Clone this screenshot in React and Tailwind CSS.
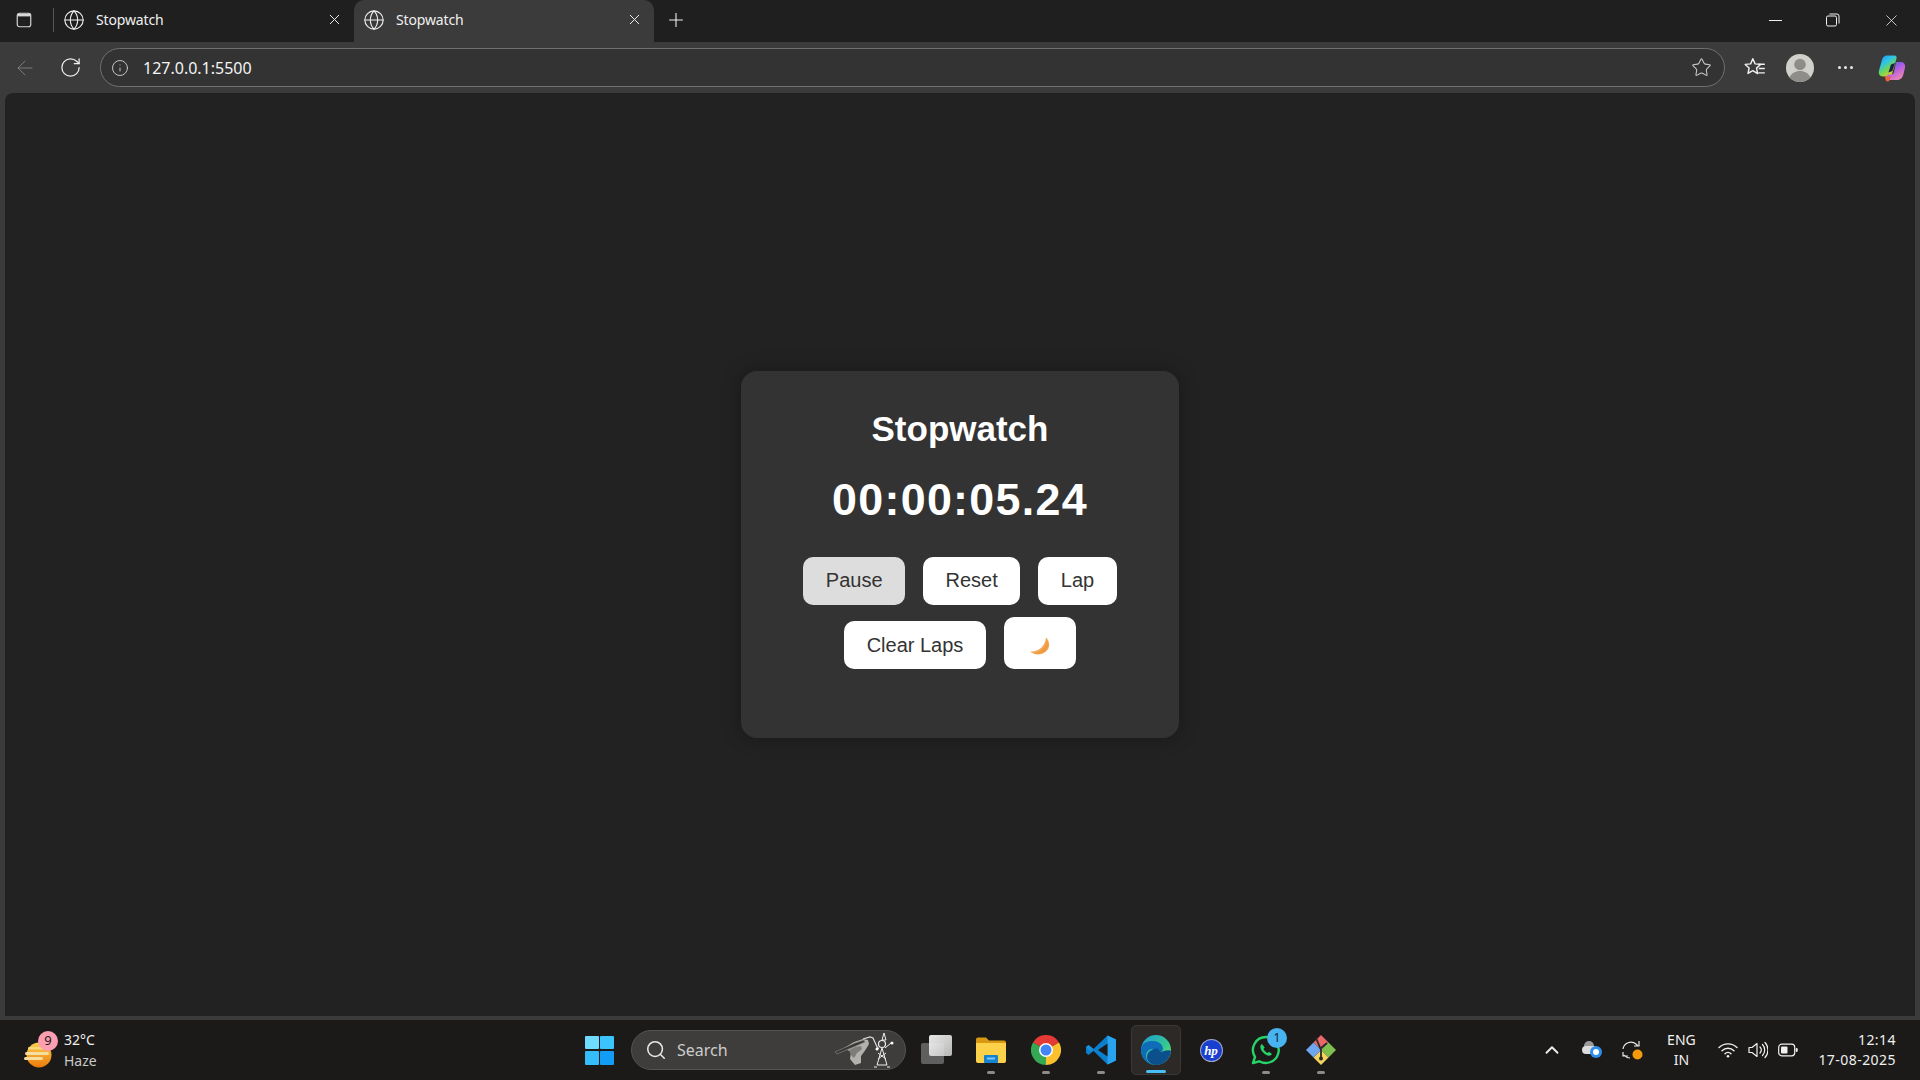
import React from 'react';
import { ArrowLeft, ChevronUp, Globe, Info, Plus, RotateCw, Search, Star, X } from 'lucide-react';

const uiFont = { fontFamily: '"Noto Sans", sans-serif' };

function SidebarIcon() {
    return (
        <svg width="20" height="20" viewBox="0 0 20 20" fill="none">
            <rect x="2.5" y="2.5" width="15" height="15" rx="2.5" stroke="#d8d8d8" strokeWidth="1.3" />
            <path d="M3 3h14v3H3z" fill="#d8d8d8" />
        </svg>
    );
}

function Tab({ active }) {
    return (
        <div className={`flex h-[42px] w-[300px] items-center pr-[11px] pb-[3px] pl-[9px] ${active ? 'rounded-t-[10px] bg-[#3b3b3b]' : ''}`}>
            <Globe size={22} strokeWidth={1.2} color="#f0f0f0" />
            <span className="ml-[11px] flex-1 text-[14px] tracking-[-0.15px] text-[#f0f0f0]">Stopwatch</span>
            <X size={17} strokeWidth={1.4} color="#eeeeee" />
        </div>
    );
}

function RestoreIcon() {
    return (
        <svg width="14" height="14" viewBox="0 0 14 14" fill="none" stroke="#f0f0f0" strokeWidth="1">
            <rect x="0.5" y="3" width="10" height="10" rx="1.5" />
            <path d="M3.5 1h7.5a2 2 0 0 1 2 2v7.5" />
        </svg>
    );
}

function FavoritesIcon() {
    return (
        <svg width="24" height="24" viewBox="0 0 22 22" fill="none" stroke="#f0f0f0" strokeWidth="1.3" strokeLinejoin="round">
            <path d="M9 2.500l2.100 4.700 5 .5-3.700 3.400 1 5-4.400-2.600L4.600 16l1-5L2 7.700l5-.5z" />
            <path d="M14 7.500h6M14.500 11.500h5.500M14 15.500h6" />
        </svg>
    );
}

function ProfileIcon() {
    return (
        <svg width="28" height="28" viewBox="0 0 28 28">
            <circle cx="14" cy="14" r="14" fill="#d2d0cb" />
            <circle cx="14" cy="10.500" r="5.800" fill="#8f8d89" />
            <path d="M3.500 23.500c1.800-4.200 5.800-6.500 10.500-6.500s8.700 2.300 10.500 6.500A14 14 0 0 1 14 28a14 14 0 0 1-10.500-4.500z" fill="#8f8d89" />
        </svg>
    );
}

function CopilotLogo() {
    return (
        <svg width="28" height="28" viewBox="0 0 28 28">
            <defs>
                <linearGradient id="copA" x1="0.1" y1="0" x2="0.7" y2="1">
                    <stop offset="0" stopColor="#1d9bf0" />
                    <stop offset="0.35" stopColor="#2fc4e8" />
                    <stop offset="0.65" stopColor="#6fd84f" />
                    <stop offset="1" stopColor="#f7c82d" />
                </linearGradient>
                <linearGradient id="copB" x1="0.2" y1="0" x2="0.8" y2="1">
                    <stop offset="0" stopColor="#4f5de8" />
                    <stop offset="0.45" stopColor="#b560e0" />
                    <stop offset="1" stopColor="#f58bb0" />
                </linearGradient>
            </defs>
            <path d="M9 1.500h7.500c1.800 0 2.500 1.500 2 3L14 20c-.6 1.600-1.800 2.500-3.500 2.500H5c-3.500 0-4.800-3-4-6l3-10.500C4.800 3 6.500 1.500 9 1.500z" fill="url(#copA)" />
            <path d="M18 8h5c3 0 4.600 2.500 4 5.500l-1.500 6.500c-.9 3.800-3 6-6.500 6h-8c-1.800 0-2.800-1.300-2.200-3l1-2.500h3c1.500 0 2.700-.8 3.200-2.300z" fill="url(#copB)" />
            <path d="M7 22.500h6l-1.500 3.800c-.3.800-1 1.200-2 1.200-1.500 0-2.200-2-2.500-5z" fill="#f0603a" />
            <path d="M13 10.500l4-1.500-2.600 8-4 1.500z" fill="#1c2340" />
        </svg>
    );
}

function MoonIcon() {
    return (
        <svg width="20" height="18" viewBox="0 0 20 18">
            <path d="M16 0.500C20 4 20.500 11 16 14.500 11.500 18.500 4.500 18.500 0 14.500 8 15.500 15 9.500 16 0.500z" fill="#f5a95a" />
            <path d="M17 3c2 4 1.500 8.500-1.500 11-3.500 3-8 3.300-11.500 2 6-.5 12-5.500 13-13z" fill="#ee9a40" />
        </svg>
    );
}

function StopButton({ label, pressed, lift = true }) {
    return (
        <button className={`h-[48px] rounded-[10px] px-[22.5px] text-[20px] text-[#333333] ${lift ? 'pb-[3px]' : ''} ${pressed ? 'bg-[#dddddd]' : 'bg-white'}`}>
            {label}
        </button>
    );
}

function StopwatchCard() {
    return (
        <div
            className="flex h-[367px] w-[438px] flex-col items-center rounded-[16px] bg-[#333333] pt-[28px] shadow-[0_0_20px_rgba(0,0,0,0.3)]"
            style={{ fontFamily: '"Liberation Sans", sans-serif' }}
        >
            <h1 className="h-[60px] text-[35px] leading-[60px] font-bold text-white">Stopwatch</h1>
            <div className="mt-[14px] text-[44.8px] leading-[52px] font-bold tracking-[1.3px] text-white">00:00:05.24</div>
            <div className="mt-[32px] flex gap-[18px]">
                <StopButton label="Pause" pressed />
                <StopButton label="Reset" />
                <StopButton label="Lap" />
            </div>
            <div className="mt-[12px] flex items-end gap-[18px]">
                <StopButton label="Clear Laps" lift={false} />
                <button className="flex h-[52px] w-[72px] items-center justify-center rounded-[10px] bg-white pt-[5px] pl-[1px]">
                    <MoonIcon />
                </button>
            </div>
        </div>
    );
}

function WeatherIcon() {
    return (
        <div className="relative h-[42px] w-[44px]">
            <svg width="30" height="28" viewBox="0 0 30 28" className="absolute top-[12px] left-0">
                <defs>
                    <linearGradient id="sun" x1="0" y1="0" x2="0" y2="1">
                        <stop offset="0" stopColor="#fbcf4b" />
                        <stop offset="1" stopColor="#ee7a0c" />
                    </linearGradient>
                </defs>
                <circle cx="15" cy="14" r="12.500" fill="url(#sun)" />
                <rect x="1" y="11" width="24" height="3" rx="1.500" fill="#f6dda0" />
                <rect x="0" y="16" width="19" height="3" rx="1.500" fill="#f6dda0" />
                <rect x="4" y="6" width="22" height="2.500" rx="1.250" fill="#f8d977" />
            </svg>
            <span className="absolute top-[2px] left-[14px] flex h-[20px] w-[20px] items-center justify-center rounded-full bg-[#fd9fb0] text-[13px] text-[#1a1a1a]">9</span>
        </div>
    );
}

function WindowsLogo() {
    const tiles = ['bg-[#6fdcff]', 'bg-[#3cc4ff]', 'bg-[#35bdfb]', 'bg-[#129cf5]'];
    return (
        <div className="grid h-[29px] w-[29px] grid-cols-2 gap-[1.5px]">
            {tiles.map((t) => (
                <div key={t} className={`rounded-[1px] ${t}`} />
            ))}
        </div>
    );
}

function Doodle() {
    return (
        <svg width="60" height="38" viewBox="0 0 60 38" fill="none">
            <path d="M9 17l10-6 9-3 5 1 1 4-3 5-2 3-3 4 0 7-6 2-5-6 1-7z" fill="#b3b1ae" />
            <path d="M14 19l6-3 6-1 1 3-5 4-3 5-3-3z" fill="#7f7d7b" />
            <path d="M0 21l20-9 9-3 1 2-9 4-19 8z" fill="#3a3836" stroke="#8d8b88" strokeWidth="0.600" />
            <path d="M28 8l7-2 3 1 5 11" stroke="#dddddd" strokeWidth="1.200" />
            <circle cx="47" cy="13" r="3.500" stroke="#eeeeee" strokeWidth="1.200" />
            <path d="M47 9l2-7 2 7z" stroke="#eeeeee" />
            <path d="M47 17l-5 17M47 17l5 17M42 34h10M42 36h-3M52 36h3M43 22l8 6M51 22l-8 6M50 17l6-5M44 17l-3 1" stroke="#eeeeee" strokeWidth="1" />
            <circle cx="42" cy="18" r="1.500" fill="#ffffff" />
            <circle cx="57" cy="12" r="1.500" fill="#ffffff" />
        </svg>
    );
}

function TaskView() {
    return (
        <div className="relative h-[30px] w-[31px]">
            <div className="absolute top-[8px] left-0 h-[21px] w-[23px] rounded-[2px] bg-[#5f5f5f]" />
            <div className="absolute top-0 left-[8px] h-[21px] w-[23px] rounded-[2px] bg-gradient-to-br from-[#ffffff] to-[#c9c9c9] opacity-90" />
        </div>
    );
}

function FolderIcon() {
    return (
        <svg width="30" height="26" viewBox="0 0 30 26">
            <path d="M0 2.500A2 2 0 0 1 2 .5h8l3 3h15a2 2 0 0 1 2 2V8H0z" fill="#d99a12" />
            <path d="M0 6h30v18a2 2 0 0 1-2 2H2a2 2 0 0 1-2-2z" fill="#fdd14a" />
            <rect x="8" y="18" width="14" height="8" rx="1" fill="#1583cf" />
            <rect x="11" y="20.500" width="8" height="2" fill="#7cc7f5" />
        </svg>
    );
}

function ChromeIcon() {
    return (
        <svg width="30" height="30" viewBox="0 0 30 30">
            <path d="M15 15L2 7.500A15 15 0 0 1 28 7.500z" fill="#e53935" />
            <path d="M15 15L28 7.500A15 15 0 0 1 15 30z" fill="#fbc02d" />
            <path d="M15 15L15 30A15 15 0 0 1 2 7.500z" fill="#34a853" />
            <circle cx="15" cy="15" r="7" fill="#ffffff" />
            <circle cx="15" cy="15" r="5.500" fill="#4285f4" />
        </svg>
    );
}

function VsCodeIcon() {
    return (
        <svg width="30" height="30" viewBox="0 0 30 30">
            <path d="M21.500 0.500L30 4.500v21l-8.500 4-14-13.500L2.500 20 0 18v-6l2.500-2 5 4z" fill="#0b7fcc" />
            <path d="M21.500 0.500L30 4.500v21l-8.500 4z" fill="#2aa3ee" />
            <path d="M21.500 8.500v13L12 15z" fill="#1c1a18" />
            <path d="M0 12l2.500-2 5 4-3 2.500z" fill="#1a8fdc" />
        </svg>
    );
}

function EdgeIcon() {
    return (
        <svg width="30" height="30" viewBox="0 0 30 30">
            <defs>
                <linearGradient id="edgeTop" x1="0" y1="0" x2="1" y2="1">
                    <stop offset="0" stopColor="#1d9ad6" />
                    <stop offset="0.6" stopColor="#36c98f" />
                    <stop offset="1" stopColor="#7ce35e" />
                </linearGradient>
            </defs>
            <circle cx="15" cy="15" r="15" fill="url(#edgeTop)" />
            <path d="M0 15C0 8 6 6 12 6c6 0 10 4 10 8 0 2-2 3-5 3-2 0-3-1-3-3-6-1-9 3-9 7 0 4 3 8 9 9C6 30 0 23 0 15z" fill="#0f6cb8" />
            <path d="M11 15c2-2 5-2 7 0 1 2 3 2 5 1 3-1 6-1 7 0-1 8-7 14-15 14-5 0-9-4-9-8 0-3 2-6 5-7z" fill="#0b4f8c" />
        </svg>
    );
}

function HpIcon() {
    return (
        <div
            className="flex h-[21px] w-[21px] items-center justify-center rounded-full bg-[#1a3fd0] text-[13px] leading-none font-bold text-white italic ring-1 ring-[#9aa5c9]"
            style={{ fontFamily: '"Liberation Serif", serif' }}
        >
            hp
        </div>
    );
}

function WhatsAppIcon() {
    return (
        <div className="relative h-[30px] w-[30px]">
            <svg width="30" height="30" viewBox="0 0 30 30" fill="none">
                <path d="M15 2a13 13 0 0 0-11 20L2 28l6.300-1.700A13 13 0 1 0 15 2z" stroke="#25d366" strokeWidth="2.400" strokeLinejoin="round" />
                <path d="M11 9c-1.500.8-2 2.500-1.500 4.200 1 3.300 4 6.300 7.300 7.300 1.700.5 3.400 0 4.200-1.500l-3-2.200-1.500 1.200c-1.700-.8-3.200-2.300-4-4l1.200-1.500z" fill="#25d366" />
            </svg>
            <span className="absolute -top-[7px] -right-[6px] flex h-[20px] w-[20px] items-center justify-center rounded-full bg-[#47b4f0] text-[12px] text-[#10202c]">1</span>
        </div>
    );
}

function GitAppIcon() {
    return (
        <svg width="30" height="30" viewBox="0 0 30 30">
            <path d="M15 0l7.500 7.500L15 15 7.500 7.500z" fill="#e8686a" />
            <path d="M22.500 7.500L30 15l-7.500 7.500L15 15z" fill="#7fbf4d" />
            <path d="M15 15l7.500 7.500L15 30l-7.500-7.500z" fill="#f4d35e" />
            <path d="M7.500 7.500L15 15l-7.500 7.500L0 15z" fill="#6ea6ef" />
            <path d="M10 3l5 12 0 9M15 13l6-5" stroke="#2a2a2a" strokeWidth="1.800" fill="none" />
            <circle cx="15" cy="23.500" r="2" fill="#2a2a2a" />
        </svg>
    );
}

function TaskIcon({ children, running, active }) {
    return (
        <div className={`relative flex h-[50px] w-[50px] items-center justify-center rounded-[5px] ${active ? 'border border-[#3a3735] bg-[#2c2927]' : ''}`}>
            {children}
            {running && (
                <span className={`absolute bottom-[1px] left-1/2 h-[3px] -translate-x-1/2 rounded-full ${active ? 'w-[20px] bg-[#47c1f5]' : 'w-[8px] bg-[#8d8a87]'}`} />
            )}
        </div>
    );
}

function CloudTray() {
    return (
        <svg width="22" height="20" viewBox="0 0 22 20">
            <circle cx="8" cy="6" r="5" fill="#9a9a9a" />
            <rect x="1" y="6" width="15" height="8" rx="4" fill="#dcdcdc" />
            <circle cx="15" cy="12" r="6" fill="#2f8fe8" />
            <circle cx="15" cy="12" r="3" fill="#ffffff" />
        </svg>
    );
}

function SyncTray() {
    return (
        <svg width="22" height="22" viewBox="0 0 22 22" fill="none" stroke="#e8e8e8" strokeWidth="1.200">
            <path d="M2 10a8 8 0 0 1 13-5l2 2M18 2v5h-5" />
            <path d="M9 19a8 8 0 0 1-6-3M2 13v4h5" />
            <circle cx="16.500" cy="15.500" r="5" fill="#f59a0c" stroke="none" />
        </svg>
    );
}

function WifiTray() {
    return (
        <svg width="20" height="16" viewBox="0 0 20 16" fill="none" stroke="#f0f0f0" strokeWidth="1.400" strokeLinecap="round">
            <path d="M1 5.500a13 13 0 0 1 18 0M4 8.700a8.500 8.500 0 0 1 12 0M7 11.700a4 4 0 0 1 6 0" />
            <circle cx="10" cy="14.300" r="1.300" fill="#f0f0f0" stroke="none" />
        </svg>
    );
}

function VolumeTray() {
    return (
        <svg width="20" height="18" viewBox="0 0 20 18" fill="none" stroke="#f0f0f0" strokeWidth="1.200" strokeLinejoin="round" strokeLinecap="round">
            <path d="M1 6.500h3L9 2.500v13L4 11.500H1z" />
            <path d="M12 6a4.500 4.500 0 0 1 0 6M14.500 3.500a8 8 0 0 1 0 11M17 1.500a11 11 0 0 1 0 15" />
        </svg>
    );
}

function BatteryTray() {
    return (
        <svg width="20" height="14" viewBox="0 0 20 14" fill="none">
            <rect x="0.700" y="1.200" width="16" height="11.600" rx="3" stroke="#f0f0f0" strokeWidth="1.200" />
            <rect x="3" y="3.500" width="6.500" height="7" rx="1" fill="#f0f0f0" />
            <rect x="17.700" y="5" width="2" height="4" rx="1" fill="#f0f0f0" />
        </svg>
    );
}

export default function App() {
    return (
        <div className="flex h-screen w-[1920px] flex-col overflow-hidden bg-[#3b3b3b]" style={uiFont}>
            {/* tab strip */}
            <div className="flex h-[42px] items-center bg-[#1f1f1f]">
                <div className="flex w-[54px] items-center pb-[3px] pl-[15px]">
                    <SidebarIcon />
                    <span className="ml-[20px] h-[24px] w-px shrink-0 bg-[#555555]" />
                </div>
                <div className="w-[300px]"><Tab /></div>
                <Tab active />
                <div className="ml-[8px] flex w-[28px] justify-center pb-[3px]">
                    <Plus size={22} strokeWidth={1.2} color="#f0f0f0" />
                </div>
                <div className="ml-auto flex items-center pb-[2px]">
                    <div className="flex w-[58px] justify-center"><span className="h-px w-[13px] bg-[#f0f0f0]" /></div>
                    <div className="flex w-[58px] justify-center"><RestoreIcon /></div>
                    <div className="flex w-[58px] justify-center"><X size={19} strokeWidth={1} color="#f0f0f0" /></div>
                </div>
            </div>

            {/* toolbar */}
            <div className="flex h-[51px] items-center">
                <div className="flex w-[50px] justify-center"><ArrowLeft size={24} strokeWidth={1} color="#7a7a7a" /></div>
                <div className="flex w-[40px] justify-center"><RotateCw size={23} strokeWidth={1.3} color="#f0f0f0" /></div>
                <div className="ml-[10px] flex h-[39px] w-[1625px] items-center rounded-full border border-[#707070] bg-[#333333] pr-[12px] pl-[10px]">
                    <Info size={18} strokeWidth={1.2} color="#d0d0d0" />
                    <span className="ml-[14px] flex-1 text-[16px] text-[#f4f4f4]">127.0.0.1:5500</span>
                    <Star size={21} strokeWidth={1.2} color="#c8c8c8" />
                </div>
                <div className="ml-[15px] flex w-[30px] justify-center"><FavoritesIcon /></div>
                <div className="ml-[16px] flex w-[28px] justify-center"><ProfileIcon /></div>
                <div className="ml-[16px] flex w-[30px] justify-center gap-[3px]">
                    <span className="h-[3px] w-[3px] rounded-full bg-[#e8e8e8]" />
                    <span className="h-[3px] w-[3px] rounded-full bg-[#e8e8e8]" />
                    <span className="h-[3px] w-[3px] rounded-full bg-[#e8e8e8]" />
                </div>
                <div className="ml-[18px]"><CopilotLogo /></div>
            </div>

            {/* page */}
            <div className="mx-[5px] flex h-[923px] items-center justify-center rounded-t-[8px] bg-[#222222]">
                <StopwatchCard />
            </div>

            {/* taskbar */}
            <div className="mt-[4px] flex h-[60px] items-center bg-[#1c1a18] text-[#f0f0f0]">
                <div className="flex w-[585px] items-center pl-[24px]">
                    <WeatherIcon />
                    <div className="-ml-[4px] leading-[21px]">
                        <div className="text-[14px]">32°C</div>
                        <div className="text-[14px] text-[#c8c8c8]">Haze</div>
                    </div>
                </div>
                <WindowsLogo />
                <div className="ml-[17px] flex h-[40px] w-[275px] items-center rounded-full border border-[#55524f] bg-[#3f3d3b] pr-[10px] pl-[13px]">
                    <Search size={22} strokeWidth={1.7} color="#e8e8e8" />
                    <span className="ml-[10px] flex-1 text-[16px] text-[#cccccc]">Search</span>
                    <Doodle />
                </div>
                <div className="ml-[5px] flex items-center gap-[5px]">
                    <TaskIcon><TaskView /></TaskIcon>
                    <TaskIcon running><FolderIcon /></TaskIcon>
                    <TaskIcon running><ChromeIcon /></TaskIcon>
                    <TaskIcon running><VsCodeIcon /></TaskIcon>
                    <TaskIcon running active><EdgeIcon /></TaskIcon>
                    <TaskIcon><HpIcon /></TaskIcon>
                    <TaskIcon running><WhatsAppIcon /></TaskIcon>
                    <TaskIcon running><GitAppIcon /></TaskIcon>
                </div>
                <div className="ml-auto flex items-center pr-[24px]">
                    <ChevronUp size={22} strokeWidth={2} color="#f0f0f0" />
                    <div className="ml-[18px] flex w-[22px] justify-center"><CloudTray /></div>
                    <div className="ml-[18px] flex w-[22px] justify-center"><SyncTray /></div>
                    <div className="ml-[8px] w-[60px] text-center text-[14px] leading-[20px]">
                        <div>ENG</div>
                        <div>IN</div>
                    </div>
                    <div className="ml-[7px] flex items-center gap-[10px]">
                        <WifiTray />
                        <VolumeTray />
                        <BatteryTray />
                    </div>
                    <div className="ml-[20px] text-right text-[14px] leading-[20px] tracking-[0.45px]">
                        <div>12:14</div>
                        <div>17-08-2025</div>
                    </div>
                </div>
            </div>
        </div>
    );
}
